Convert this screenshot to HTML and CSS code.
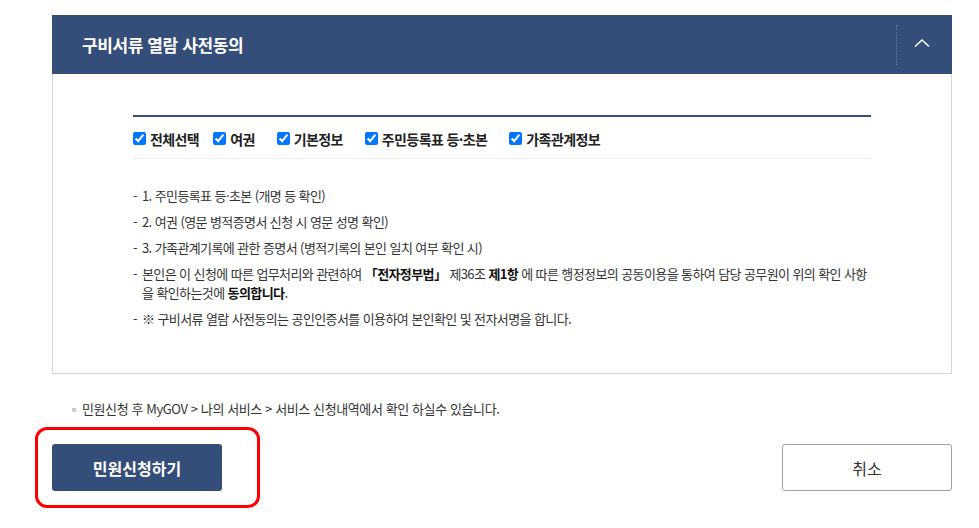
FILE: index.html
```html
<!DOCTYPE html>
<html lang="ko">

<head>
	<meta charset="utf-8">
	<link rel="stylesheet" href="styles.css">
</head>

<body>
	<div class="wrap">
		<section class="agree">
			<div class="agree-head">
				<h2>구비서류 열람 사전동의</h2>
				<button type="button" class="toggle" aria-label="접기">
					<svg width="16" height="10" viewBox="0 0 16 10">
						<path d="M1 8.5 L8 2 L15 8.5" fill="none" stroke="#fff" stroke-width="1.6" />
					</svg>
				</button>
			</div>
			<div class="agree-body">
				<div class="checks">
					<label class="first"><input type="checkbox" checked>전체선택</label>
					<label><input type="checkbox" checked>여권</label>
					<label><input type="checkbox" checked>기본정보</label>
					<label><input type="checkbox" checked>주민등록표 등·초본</label>
					<label><input type="checkbox" checked>가족관계정보</label>
				</div>
				<ul class="docs">
					<li>1. 주민등록표 등·초본 (개명 등 확인)</li>
					<li>2. 여권 (영문 병적증명서 신청 시 영문 성명 확인)</li>
					<li>3. 가족관계기록에 관한 증명서 (병적기록의 본인 일치 여부 확인 시)</li>
					<li>본인은 이 신청에 따른 업무처리와 관련하여 <b>「전자정부법」</b> 제36조 <b>제1항</b> 에 따른 행정정보의 공동이용을 통하여 담당 공무원이 위의 확인 사항<br>을 확인하는것에 <b>동의합니다</b>.</li>
					<li>※ 구비서류 열람 사전동의는 공인인증서를 이용하여 본인확인 및 전자서명을 합니다.</li>
				</ul>
			</div>
		</section>

		<p class="note">민원신청 후 MyGOV &gt; 나의 서비스 &gt; 서비스 신청내역에서 확인 하실수 있습니다.</p>

		<div class="actions">
			<div class="marked">
				<button type="button" class="btn btn-primary">민원신청하기</button>
			</div>
			<button type="button" class="btn btn-line">취소</button>
		</div>
	</div>
</body>

</html>
```

FILE: styles.css
```css
html,
body {
	min-height: 528px;
}

body {
	margin: 0;
	font-family: "Noto Sans CJK KR", "Noto Sans", sans-serif;
	color: #333;
	background: #fff;
}

.wrap {
	width: 900px;
	margin-left: 52px;
	padding: 15px 0 40px;
}

.agree-head {
	display: flex;
	align-items: center;
	height: 59px;
	background: #354d79;
	padding-left: 30px;
}

.agree-head h2 {
	flex: 1;
	margin: 0;
	font-size: 17px;
	font-weight: bold;
	color: #fff;
	letter-spacing: -0.4px;
}

.toggle {
	width: 56px;
	height: 40px;
	border: 0;
	border-left: 1px dotted #6a7fa3;
	background: none;
	padding: 0 5px 3px 0;
	cursor: pointer;
}

.agree-body {
	border: 1px solid #d7d7d7;
	border-top: 0;
	padding: 41px 80px 38px;
}

.checks {
	display: flex;
	align-items: center;
	height: 44px;
	padding-top: 2px;
	box-sizing: border-box;
	border-top: 2px solid #354d79;
	border-bottom: 1px solid #ececec;
}

.checks label {
	display: flex;
	align-items: center;
	margin-right: 22px;
	font-size: 14px;
	font-weight: bold;
	color: #222;
	letter-spacing: -0.6px;
}

.checks label.first {
	margin-right: 14px;
}

.checks input {
	width: 13px;
	height: 13px;
	margin: 0 4px 0 0;
}

.docs {
	list-style: none;
	margin: 27px 0 0;
	padding: 0 0 0 9px;
	font-size: 13px;
	line-height: 19px;
	letter-spacing: -0.6px;
	color: #333;
}

.docs li {
	margin-bottom: 7px;
	text-indent: -9px;
	white-space: nowrap;
}

.docs li::before {
	content: "-";
	display: inline-block;
	width: 9px;
	text-indent: 0;
}

.docs b {
	color: #111;
}

.note {
	position: relative;
	margin: 25px 0 0;
	padding-left: 30px;
	font-size: 13px;
	letter-spacing: -0.4px;
	color: #333;
}

.note::before {
	content: "";
	position: absolute;
	left: 20px;
	top: 9px;
	width: 4px;
	height: 4px;
	background: #ccc;
}

.actions {
	display: flex;
	justify-content: space-between;
	margin-top: 26px;
}

.marked {
	position: relative;
}

.marked::after {
	content: "";
	position: absolute;
	left: -17px;
	top: -17px;
	right: -38px;
	bottom: -17px;
	border: 3px solid #f00;
	border-radius: 12px;
}

.btn {
	display: block;
	width: 170px;
	height: 47px;
	border-radius: 3px;
	font-family: inherit;
	font-size: 16px;
	cursor: pointer;
}

.btn-primary {
	border: 0;
	background: #354d79;
	color: #fff;
	font-weight: bold;
}

.btn-line {
	border: 1px solid #a0a0a0;
	background: #fff;
	color: #333;
}
```
